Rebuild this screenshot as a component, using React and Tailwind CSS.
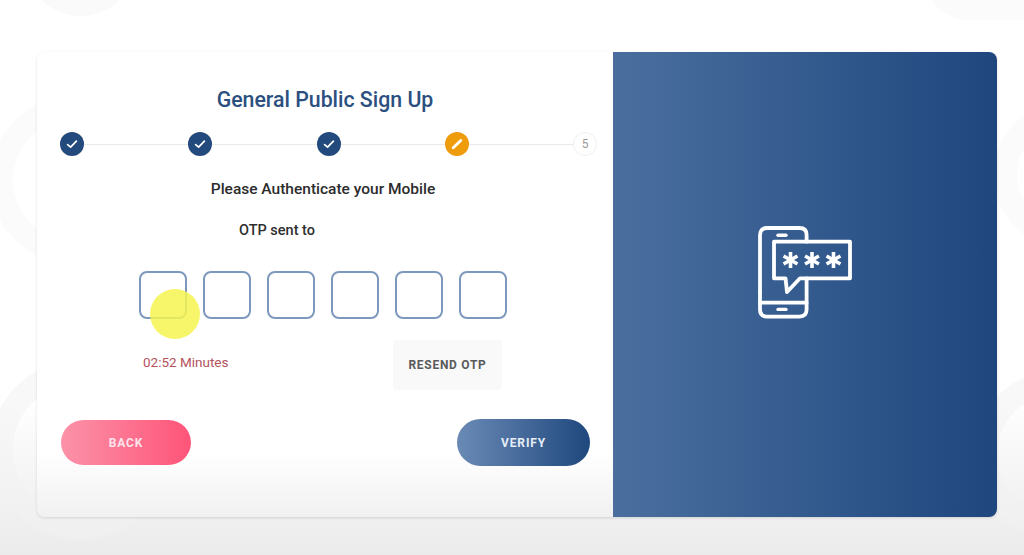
import React from "react";

const font = { fontFamily: "Roboto, 'Liberation Sans', sans-serif" };

function Check() {
  return (
    <svg width="14" height="14" viewBox="0 0 14 14" fill="none">
      <path d="M2.6 7.6 L5.6 10.2 L11.4 4.2" stroke="#fff" strokeWidth="1.7" strokeLinecap="round" strokeLinejoin="round" />
    </svg>
  );
}

function Done() {
  return (
    <div className="flex h-6 w-6 shrink-0 items-center justify-center rounded-full bg-[#234a7d]">
      <Check />
    </div>
  );
}

function Line() {
  return <div className="h-px flex-1 bg-[#e9e9e9]" />;
}

function Star({ cx }) {
  const spokes = [0, 60, 120];
  return (
    <g transform={`translate(${cx} 38)`}>
      {spokes.map((a) => (
        <line key={a} x1="0" y1="-8" x2="0" y2="8" stroke="#fff" strokeWidth="3.6" strokeLinecap="butt" transform={`rotate(${a})`} />
      ))}
    </g>
  );
}

function OtpIcon() {
  return (
    <svg width="100" height="100" viewBox="0 0 100 100" fill="none" stroke="#fff" strokeWidth="3.8" strokeLinecap="round" strokeLinejoin="round">
      <path d="M5 70 V13 Q5 6 12 6 H44.6 Q51.6 6 51.6 13 V19.7" />
      <path d="M5 70 V87.6 Q5 94.6 12 94.6 H44.6 Q51.6 94.6 51.6 87.6 V56.3" />
      <path d="M5 80.7 H51.6" />
      <path d="M19 19.7 H95 V56.3 H45 L32 70 L30.5 56.3 H19 Z" />
      <path d="M23 13.3 H31" strokeWidth="3.4" />
      <path d="M23 87.4 H31" strokeWidth="3.4" />
      <Star cx="35.5" />
      <Star cx="57" />
      <Star cx="78.5" />
    </svg>
  );
}

export default function App() {
  return (
    <div
      style={font}
      className="relative h-[555px] w-[1024px] overflow-hidden bg-[linear-gradient(180deg,#ffffff_72%,#ebebeb_100%)] pt-[52px] pl-[37px]"
    >
      <div className="absolute left-[25px] top-[-95px] h-[111px] w-[111px] rounded-full bg-[#fafafa]" />
      <div className="absolute left-[-10px] top-[95px] h-[170px] w-[170px] rounded-full border-[23px] border-[#fbfbfb]" />
      <div className="absolute left-[-10px] top-[360px] h-[180px] w-[180px] rounded-full border-[23px] border-[#f2f2f2]/50" />
      <div className="absolute right-[-70px] top-[-70px] h-[90px] w-[170px] rounded-full bg-[#fbfbfb]" />
      <div className="absolute right-[-120px] top-[100px] h-[150px] w-[150px] rounded-full border-[23px] border-[#fbfbfb]" />
      <div className="absolute right-[-120px] top-[370px] h-[170px] w-[170px] rounded-full border-[23px] border-[#f2f2f2]/50" />

      <div className="relative flex h-[465px] w-[960px] overflow-hidden rounded-lg shadow-[0_1px_3px_rgba(0,0,0,0.13)]">
        <div className="flex w-[576px] flex-col bg-[linear-gradient(180deg,#ffffff_86%,#f1f1f1_100%)] pt-[34px] pl-[23px] pr-[16px]">
          <h1 className="ml-[-7px] text-center text-[21.3px] leading-7 font-medium text-[#2b5080]">
            General Public Sign Up
          </h1>

          <div className="mt-[18px] flex h-6 items-center">
            <Done />
            <Line />
            <Done />
            <Line />
            <Done />
            <Line />
            <div className="flex h-6 w-6 shrink-0 items-center justify-center rounded-full bg-[#ee9b0c]">
              <svg width="14" height="14" viewBox="0 0 14 14" fill="none">
                <path d="M3.2 10.8 L10.8 3.6" stroke="#fff" strokeWidth="2.8" strokeLinecap="round" />
              </svg>
            </div>
            <Line />
            <div className="flex h-6 w-6 shrink-0 items-center justify-center rounded-full border border-[#f0f0f0] bg-white text-xs text-[#9a9a9a]">
              5
            </div>
          </div>

          <p className="mt-[23px] ml-[-11px] text-center text-[15.5px] leading-5 font-medium text-[#2c2c2c]">
            Please Authenticate your Mobile
          </p>

          <p className="mt-[22px] ml-[179px] text-[14.5px] leading-5 font-medium text-[#2f2f2f]">OTP sent to</p>

          <div className="mt-[30px] ml-[78.5px] flex gap-4">
            {[0, 1, 2, 3, 4, 5].map((i) => (
              <div key={i} className="h-12 w-12 rounded-lg border-2 border-[#7c99bd] bg-white" />
            ))}
          </div>

          <div className="mt-[21px] flex h-[50px] items-center">
            <span className="ml-[83px] mt-[-6px] w-[85px] shrink-0 text-[13.5px] whitespace-nowrap text-[#b5525c]">02:52 Minutes</span>
            <button className="ml-[165px] h-[50px] w-[109px] rounded-sm bg-[#f9f9f9] text-xs font-bold tracking-[0.06em] text-[#5a5a5a]">
              RESEND OTP
            </button>
          </div>

          <div className="mt-[29px] flex h-[47px] items-center">
            <button className="ml-[1px] h-[45px] w-[130px] rounded-full bg-[linear-gradient(90deg,#fb92a8,#fe5479)] text-xs font-bold tracking-[0.07em] text-[#fde3ea]">
              BACK
            </button>
            <button className="ml-[266px] h-[47px] w-[133px] rounded-full bg-[linear-gradient(90deg,#6a8ab5,#1f487e)] text-xs font-bold tracking-[0.07em] text-[#e6edf6]">
              VERIFY
            </button>
          </div>
        </div>

        <div className="flex w-[384px] items-center justify-center bg-[linear-gradient(90deg,#4a6f9f,#1f477e)] pb-[26px]">
          <OtpIcon />
        </div>
      </div>

      <div className="absolute left-[150px] top-[289px] h-[50px] w-[50px] rounded-full bg-[#f6f550]/85" />
    </div>
  );
}
